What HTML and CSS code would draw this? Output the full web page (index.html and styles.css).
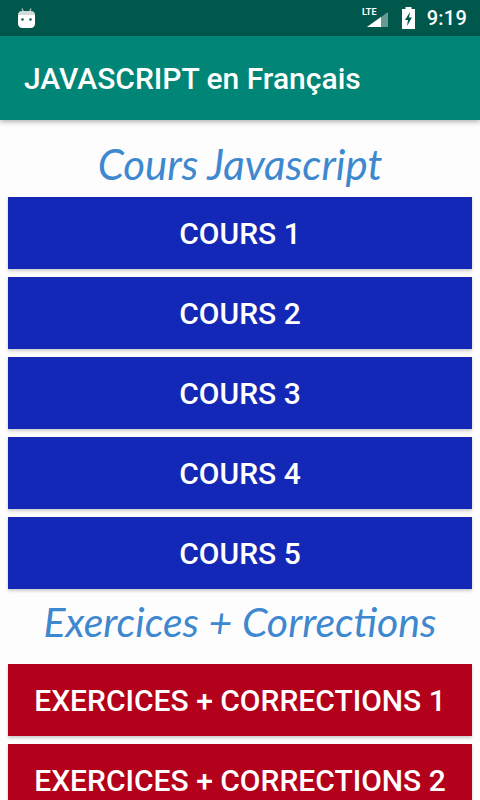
FILE: index.html
```html
<!DOCTYPE html>
<html lang="fr">
<head>
  <meta charset="UTF-8">
  <title>JAVASCRIPT en Français</title>
  <link rel="stylesheet" href="styles.css">
</head>
<body>

  <div class="status-bar">
    <svg class="android-icon" width="18" height="20" viewBox="0 0 18 20">
      <path class="antenna" d="M4 0.500 5.500 4M13 0.500 11.500 4" />
      <path class="head-top" d="M0 8V7c0-2.500 1.500-4 4-4h9c2.500 0 4 1.500 4 4v1z" />
      <path class="head" d="M0 7h17v8.500c0 2.800-1.700 4.500-4.500 4.500h-8C1.700 20 0 18.300 0 15.500z" />
      <circle class="eye" cx="4.500" cy="11.500" r="1.200" />
      <circle class="eye" cx="12.500" cy="11.500" r="1.200" />
    </svg>
    <div class="status-right">
      <svg class="signal-icon" width="26" height="22" viewBox="0 0 26 22">
        <text x="0" y="8" class="lte">LTE</text>
        <path d="M5 20 26 5v15z" fill="#fff" opacity="0.4" />
        <path d="M5 20 19 10v10z" fill="#fff" />
      </svg>
      <svg class="battery-icon" width="13" height="22" viewBox="0 0 13 22">
        <path d="M3.500 2V0h6v2H13v20H0V2z" fill="#fff" />
        <path d="M8 5 3 13h3L5 19l5-8.500H7z" fill="#00574b" />
      </svg>
      <span class="clock">9:19</span>
    </div>
  </div>

  <div class="toolbar">JAVASCRIPT en Français</div>

  <div class="content">
    <div class="heading heading-cours">Cours Javascript</div>
    <div class="btn btn-blue">COURS 1</div>
    <div class="btn btn-blue">COURS 2</div>
    <div class="btn btn-blue">COURS 3</div>
    <div class="btn btn-blue">COURS 4</div>
    <div class="btn btn-blue">COURS 5</div>

    <div class="heading heading-exos">Exercices + Corrections</div>
    <div class="btn btn-red">EXERCICES + CORRECTIONS 1</div>
    <div class="btn btn-red">EXERCICES + CORRECTIONS 2</div>
  </div>

</body>
</html>
```

FILE: styles.css
```css
html, body {
  height: 100%;
}

body {
  margin: 0;
  overflow: hidden;
  background: #fdfdfe;
  font-family: Roboto, sans-serif;
  color: #fff;
}

.status-bar {
  height: 36px;
  background: #00574b;
  display: flex;
  align-items: center;
  justify-content: space-between;
  padding: 0 13px 0 18px;
}

.status-right {
  display: flex;
  align-items: center;
  gap: 12px;
}

.signal-icon {
  margin-right: 2px;
}

.antenna {
  stroke: #fff;
  stroke-width: 1.200;
  opacity: 0.7;
  fill: none;
}

.head {
  fill: #fff;
}

.head-top {
  fill: #cfdcd9;
}

.eye {
  fill: #00574b;
}

.lte {
  font-size: 9px;
  font-weight: 700;
  fill: #fff;
}

.clock {
  font-size: 20px;
  font-weight: 500;
  letter-spacing: 0.25px;
}

.toolbar {
  height: 84px;
  box-sizing: border-box;
  padding-left: 24px;
  background: #008577;
  display: flex;
  align-items: center;
  font-size: 30px;
  font-weight: 500;
  box-shadow: 0 2px 5px rgba(0,0,0,0.3);
  position: relative;
}

.content {
  padding: 0 8px;
}

.heading {
  text-align: center;
  font-family: Lato, sans-serif;
  font-style: italic;
  color: #3d88cf;
  white-space: nowrap;
}

.heading-cours {
  height: 77px;
  line-height: 88px;
  font-size: 42px;
}

.heading-exos {
  height: 67px;
  line-height: 50px;
  font-size: 41px;
}

.btn {
  height: 72px;
  margin-bottom: 8px;
  display: flex;
  align-items: center;
  justify-content: center;
  font-size: 30px;
  font-weight: 500;
  box-shadow: 0 2px 3px rgba(0,0,0,0.2);
}

.btn-blue {
  background: #1428b8;
}

.btn-red {
  background: #b3001b;
}
```
